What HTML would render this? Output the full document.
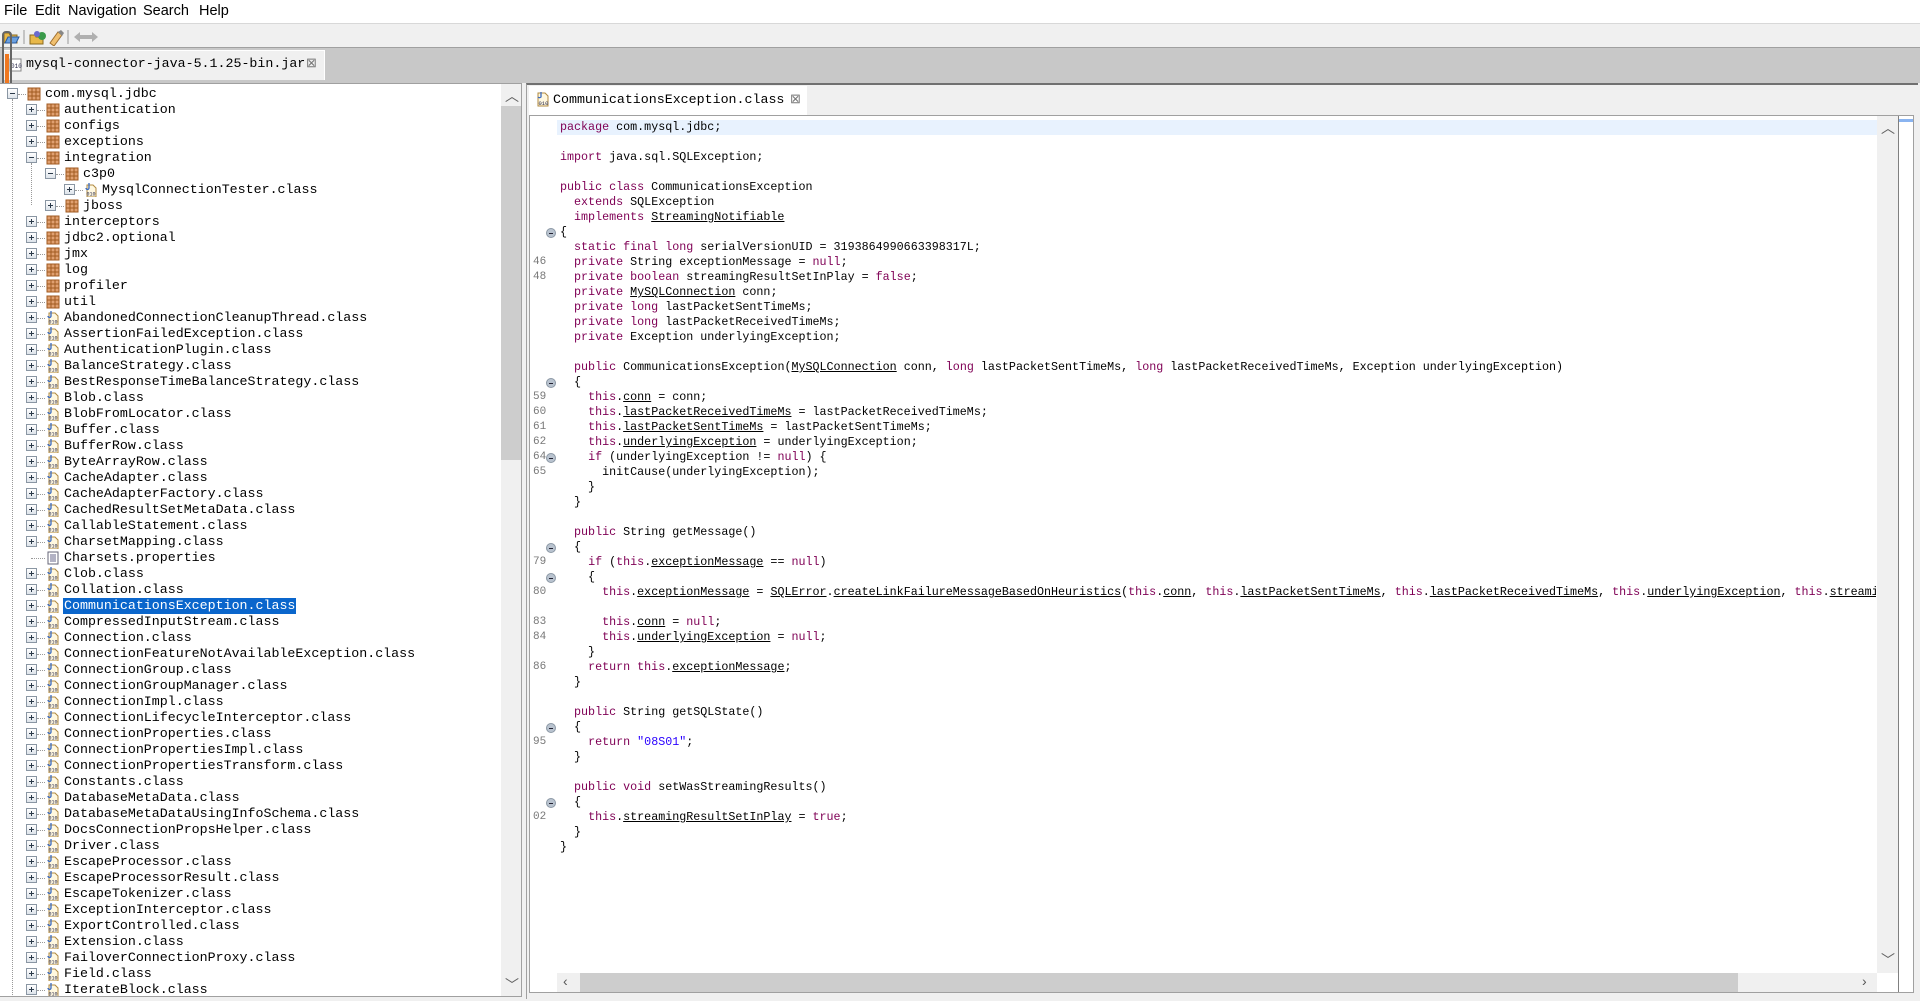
<!DOCTYPE html>
<html><head><meta charset="utf-8">
<style>
*{margin:0;padding:0;box-sizing:border-box}
body{width:1920px;height:1001px;overflow:hidden;background:#f0f0f0;font-family:"Liberation Sans",sans-serif;position:relative}
.abs{position:absolute}
.menu{top:0;left:0;width:1920px;height:24px;background:#fff;border-bottom:1px solid #d8d8d8;font-size:14.5px;color:#000}
.menu span{position:absolute;top:3px}
.tree{font-family:"Liberation Mono",monospace;font-size:13.3px;color:#000}
.row{position:absolute;height:16px;line-height:16px;white-space:pre}
.box{position:absolute;width:11px;height:11px;border:1px solid #8a96a3;background:linear-gradient(#fff,#dde3ea);top:2px}
.box:before{content:"";position:absolute;left:2px;top:4px;width:5px;height:1px;background:#2b3a4a}
.box.p:after{content:"";position:absolute;left:4px;top:2px;width:1px;height:5px;background:#2b3a4a}
.hd{position:absolute;top:8px;height:0;border-top:1px dotted #999}
.ico{position:absolute;top:1px;width:14px;height:14px}
.sel{background:#0a66cc;color:#fff;padding:0 1px;margin-left:-1px}
.code{font-family:"Liberation Mono",monospace;font-size:11.7px;color:#000}
.ln{position:absolute;height:15px;line-height:15px;white-space:pre}
.k{color:#7f0055}
.s{color:#2a00ff}
.u{text-decoration:underline}
.num{position:absolute;left:533px;font-family:"Liberation Mono",monospace;font-size:11px;color:#787878;height:15px;line-height:15px}
.fold{position:absolute;left:546px;width:10px;height:10px;border-radius:50%;background:#b9c3cf;border:1px solid #8c98a5}
.fold:after{content:"";position:absolute;left:2px;top:3.5px;width:4px;height:1px;background:#223}
</style></head><body>
<div class="abs menu"><span style="left:4px">File</span><span style="left:35px">Edit</span><span style="left:68px">Navigation</span><span style="left:143px">Search</span><span style="left:199px">Help</span></div>
<!-- toolbar -->
<div class="abs" style="top:24px;left:0;width:1920px;height:24px;background:#f0f0f0;border-bottom:1px solid #a0a0a0"></div>
<svg class="abs" style="left:2px;top:28px" width="110" height="18">
<path d="M2 5h5l1 2h7v8H2z" fill="#e8b84a" stroke="#8a6a20"/><path d="M3 15l3-6h11l-3 6z" fill="#6aa0e0" stroke="#2a5aa0"/>
<line x1="22" y1="2" x2="22" y2="16" stroke="#999"/>
<path d="M28 7h5l1 2h7v7H28z" fill="#e8b84a" stroke="#8a6a20"/><circle cx="40" cy="8" r="4" fill="#3a9a4a"/><circle cx="35" cy="6" r="3" fill="#6a6ad0"/>
<path d="M48 15l8-11 4 3-8 11z" fill="#f0c070" stroke="#a07030"/><path d="M56 4l3-2 3 3-2 3z" fill="#888"/>
<line x1="66" y1="2" x2="66" y2="16" stroke="#999"/>
<path d="M72 9l6-5v3h6v4h-6v3z" fill="#b0b0b0"/><path d="M108 9l-6-5v3h-6v4h6v3z" fill="#b0b0b0" transform="translate(-12 0)"/>
</svg>
<!-- left tab bar -->
<div class="abs" style="top:48px;left:0;width:1920px;height:35px;background:#c8c8c8"></div>
<div class="abs" style="top:50px;left:2px;width:323px;height:30px;background:#f0f0f0;border:1px solid #fff;border-bottom:none"></div>
<svg class="abs" style="left:9px;top:58px" width="14" height="14"><rect x="1" y="1" width="11" height="12" fill="#fff" stroke="#888"/><text x="2" y="10" font-size="6" font-family="Liberation Mono" fill="#224">010</text></svg>
<div class="abs" style="top:56px;left:26px;font-family:'Liberation Mono',monospace;font-size:13.3px;white-space:pre">mysql-connector-java-5.1.25-bin.jar</div>
<div class="abs" style="top:55px;left:306px;font-size:13px;color:#777">⊠</div>
<div class="abs" style="left:5px;top:54px;width:4px;height:40px;background:#f07820"></div>
<div class="abs" style="left:2px;top:31px;width:10px;height:64px;border:2px solid #666;border-radius:4px"></div>
<!-- tree panel -->
<div class="abs" style="top:83px;left:0;width:522px;height:914px;background:#fff;border-top:1px solid #a0a0a0;border-right:1px solid #a0a0a0;border-bottom:1px solid #a0a0a0"></div>
<div class="abs" style="left:501px;top:84px;width:20px;height:912px;background:#f0f0f0"></div>
<div class="abs" style="left:501px;top:106px;width:20px;height:354px;background:#cdcdcd"></div>
<div class="abs" style="left:505px;top:86px;font-size:14px;color:#606060">︿</div>
<div class="abs" style="left:505px;top:975px;font-size:14px;color:#606060">﹀</div>
<div class="abs" style="left:12px;top:99px;height:898px;border-left:1px dotted #999"></div>
<div class="abs" style="left:31px;top:163px;height:42px;border-left:1px dotted #999"></div>
<div class="abs tree" style="left:0;top:86px;width:500px;height:910px;overflow:hidden" id="tree">
</div>
<!-- editor panel -->
<div class="abs" style="top:83px;left:526px;width:1392px;height:916px;background:#f0f0f0;border-top:2px solid #707070;border-left:1px solid #a0a0a0"></div>
<div class="abs" style="top:86px;left:529px;width:278px;height:30px;background:#fff"></div>
<svg class="abs" style="left:535px;top:91px" width="16" height="16"><path d="M3 2h7l3 3v10H3z" fill="#fff8e0" stroke="#b08a40"/><path d="M6 1v5a2 2 0 0 1-3 0" fill="none" stroke="#3a6ac0" stroke-width="1.3"/><text x="3.5" y="14" font-size="5.5" font-family="Liberation Mono" fill="#224">010</text></svg>
<div class="abs" style="top:92px;left:553px;font-family:'Liberation Mono',monospace;font-size:13.3px;white-space:pre">CommunicationsException.class</div>
<div class="abs" style="top:91px;left:790px;font-size:13px;color:#777">⊠</div>
<div class="abs" style="top:115px;left:529px;width:1385px;height:878px;border:1px solid #a0a0a0;background:#fff"></div>
<div class="abs" style="top:120px;left:557px;width:1320px;height:15px;background:#e8f2fe"></div>
<div class="abs" style="top:116px;left:1877px;width:21px;height:857px;background:#f0f0f0"></div>
<div class="abs" style="top:116px;left:1898px;width:1px;height:876px;background:#808080"></div>
<div class="abs" style="top:119px;left:1899px;width:14px;height:3px;background:#8ab4f0"></div>
<div class="abs" style="left:1881px;top:118px;font-size:14px;color:#606060">︿</div>
<div class="abs" style="left:1881px;top:950px;font-size:14px;color:#606060">﹀</div>
<div class="abs" style="top:973px;left:557px;width:1320px;height:19px;background:#f0f0f0"></div>
<div class="abs" style="top:973px;left:580px;width:1158px;height:19px;background:#cdcdcd"></div>
<div class="abs" style="top:973px;left:563px;font-size:14px;color:#555">‹</div>
<div class="abs" style="top:973px;left:1862px;font-size:14px;color:#555">›</div>
<div class="abs code" style="left:560px;top:120px;width:1316px;height:852px;overflow:hidden">
<div style="position:relative">
<div class="ln" style="top:0"><span class="k">package</span> com.mysql.jdbc;</div>
<div class="ln" style="top:30px"><span class="k">import</span> java.sql.SQLException;</div>
<div class="ln" style="top:60px"><span class="k">public class</span> CommunicationsException</div>
<div class="ln" style="top:75px">  <span class="k">extends</span> SQLException</div>
<div class="ln" style="top:90px">  <span class="k">implements</span> <span class="u">StreamingNotifiable</span></div>
<div class="ln" style="top:105px">{</div>
<div class="ln" style="top:120px">  <span class="k">static final long</span> serialVersionUID = 3193864990663398317L;</div>
<div class="ln" style="top:135px">  <span class="k">private</span> String exceptionMessage = <span class="k">null</span>;</div>
<div class="ln" style="top:150px">  <span class="k">private boolean</span> streamingResultSetInPlay = <span class="k">false</span>;</div>
<div class="ln" style="top:165px">  <span class="k">private</span> <span class="u">MySQLConnection</span> conn;</div>
<div class="ln" style="top:180px">  <span class="k">private long</span> lastPacketSentTimeMs;</div>
<div class="ln" style="top:195px">  <span class="k">private long</span> lastPacketReceivedTimeMs;</div>
<div class="ln" style="top:210px">  <span class="k">private</span> Exception underlyingException;</div>
<div class="ln" style="top:240px">  <span class="k">public</span> CommunicationsException(<span class="u">MySQLConnection</span> conn, <span class="k">long</span> lastPacketSentTimeMs, <span class="k">long</span> lastPacketReceivedTimeMs, Exception underlyingException)</div>
<div class="ln" style="top:255px">  {</div>
<div class="ln" style="top:270px">    <span class="k">this</span>.<span class="u">conn</span> = conn;</div>
<div class="ln" style="top:285px">    <span class="k">this</span>.<span class="u">lastPacketReceivedTimeMs</span> = lastPacketReceivedTimeMs;</div>
<div class="ln" style="top:300px">    <span class="k">this</span>.<span class="u">lastPacketSentTimeMs</span> = lastPacketSentTimeMs;</div>
<div class="ln" style="top:315px">    <span class="k">this</span>.<span class="u">underlyingException</span> = underlyingException;</div>
<div class="ln" style="top:330px">    <span class="k">if</span> (underlyingException != <span class="k">null</span>) {</div>
<div class="ln" style="top:345px">      initCause(underlyingException);</div>
<div class="ln" style="top:360px">    }</div>
<div class="ln" style="top:375px">  }</div>
<div class="ln" style="top:405px">  <span class="k">public</span> String getMessage()</div>
<div class="ln" style="top:420px">  {</div>
<div class="ln" style="top:435px">    <span class="k">if</span> (<span class="k">this</span>.<span class="u">exceptionMessage</span> == <span class="k">null</span>)</div>
<div class="ln" style="top:450px">    {</div>
<div class="ln" style="top:465px">      <span class="k">this</span>.<span class="u">exceptionMessage</span> = <span class="u">SQLError</span>.<span class="u">createLinkFailureMessageBasedOnHeuristics</span>(<span class="k">this</span>.<span class="u">conn</span>, <span class="k">this</span>.<span class="u">lastPacketSentTimeMs</span>, <span class="k">this</span>.<span class="u">lastPacketReceivedTimeMs</span>, <span class="k">this</span>.<span class="u">underlyingException</span>, <span class="k">this</span>.<span class="u">streamingResultSetInPlay</span>);</div>
<div class="ln" style="top:495px">      <span class="k">this</span>.<span class="u">conn</span> = <span class="k">null</span>;</div>
<div class="ln" style="top:510px">      <span class="k">this</span>.<span class="u">underlyingException</span> = <span class="k">null</span>;</div>
<div class="ln" style="top:525px">    }</div>
<div class="ln" style="top:540px">    <span class="k">return this</span>.<span class="u">exceptionMessage</span>;</div>
<div class="ln" style="top:555px">  }</div>
<div class="ln" style="top:585px">  <span class="k">public</span> String getSQLState()</div>
<div class="ln" style="top:600px">  {</div>
<div class="ln" style="top:615px">    <span class="k">return</span> <span class="s">"08S01"</span>;</div>
<div class="ln" style="top:630px">  }</div>
<div class="ln" style="top:660px">  <span class="k">public void</span> setWasStreamingResults()</div>
<div class="ln" style="top:675px">  {</div>
<div class="ln" style="top:690px">    <span class="k">this</span>.<span class="u">streamingResultSetInPlay</span> = <span class="k">true</span>;</div>
<div class="ln" style="top:705px">  }</div>
<div class="ln" style="top:720px">}</div>
</div></div>
<!-- gutter numbers -->
<div class="num" style="top:255px">46</div>
<div class="num" style="top:270px">48</div>
<div class="num" style="top:390px">59</div>
<div class="num" style="top:405px">60</div>
<div class="num" style="top:420px">61</div>
<div class="num" style="top:435px">62</div>
<div class="num" style="top:450px">64</div>
<div class="num" style="top:465px">65</div>
<div class="num" style="top:555px">79</div>
<div class="num" style="top:585px">80</div>
<div class="num" style="top:615px">83</div>
<div class="num" style="top:630px">84</div>
<div class="num" style="top:660px">86</div>
<div class="num" style="top:735px">95</div>
<div class="num" style="top:810px">02</div>
<div class="fold" style="top:228px"></div>
<div class="fold" style="top:378px"></div>
<div class="fold" style="top:453px"></div>
<div class="fold" style="top:543px"></div>
<div class="fold" style="top:573px"></div>
<div class="fold" style="top:723px"></div>
<div class="fold" style="top:798px"></div>
<script>
var items=[
[0,'-','pkg','com.mysql.jdbc'],[1,'+','pkg','authentication'],[1,'+','pkg','configs'],[1,'+','pkg','exceptions'],[1,'-','pkg','integration'],[2,'-','pkg','c3p0'],[3,'+','cls','MysqlConnectionTester.class'],[2,'+','pkg','jboss'],[1,'+','pkg','interceptors'],[1,'+','pkg','jdbc2.optional'],[1,'+','pkg','jmx'],[1,'+','pkg','log'],[1,'+','pkg','profiler'],[1,'+','pkg','util'],
[1,'+','cls','AbandonedConnectionCleanupThread.class'],[1,'+','cls','AssertionFailedException.class'],[1,'+','cls','AuthenticationPlugin.class'],[1,'+','cls','BalanceStrategy.class'],[1,'+','cls','BestResponseTimeBalanceStrategy.class'],[1,'+','cls','Blob.class'],[1,'+','cls','BlobFromLocator.class'],[1,'+','cls','Buffer.class'],[1,'+','cls','BufferRow.class'],[1,'+','cls','ByteArrayRow.class'],[1,'+','cls','CacheAdapter.class'],[1,'+','cls','CacheAdapterFactory.class'],[1,'+','cls','CachedResultSetMetaData.class'],[1,'+','cls','CallableStatement.class'],[1,'+','cls','CharsetMapping.class'],[1,'','prop','Charsets.properties'],[1,'+','cls','Clob.class'],[1,'+','cls','Collation.class'],[1,'+','cls','CommunicationsException.class',1],[1,'+','cls','CompressedInputStream.class'],[1,'+','cls','Connection.class'],[1,'+','cls','ConnectionFeatureNotAvailableException.class'],[1,'+','cls','ConnectionGroup.class'],[1,'+','cls','ConnectionGroupManager.class'],[1,'+','cls','ConnectionImpl.class'],[1,'+','cls','ConnectionLifecycleInterceptor.class'],[1,'+','cls','ConnectionProperties.class'],[1,'+','cls','ConnectionPropertiesImpl.class'],[1,'+','cls','ConnectionPropertiesTransform.class'],[1,'+','cls','Constants.class'],[1,'+','cls','DatabaseMetaData.class'],[1,'+','cls','DatabaseMetaDataUsingInfoSchema.class'],[1,'+','cls','DocsConnectionPropsHelper.class'],[1,'+','cls','Driver.class'],[1,'+','cls','EscapeProcessor.class'],[1,'+','cls','EscapeProcessorResult.class'],[1,'+','cls','EscapeTokenizer.class'],[1,'+','cls','ExceptionInterceptor.class'],[1,'+','cls','ExportControlled.class'],[1,'+','cls','Extension.class'],[1,'+','cls','FailoverConnectionProxy.class'],[1,'+','cls','Field.class'],[1,'+','cls','IterateBlock.class']];
var icons={
pkg:'<svg class="ico" viewBox="0 0 14 14"><rect x="1" y="1" width="12" height="12" fill="#e0a070" stroke="#a05a20"/><path d="M1 5h12M1 9h12M5 1v12M9 1v12" stroke="#a05a20"/></svg>',
cls:'<svg class="ico" viewBox="0 0 14 14"><path d="M3 2h6l3 3v9H3z" fill="#fff8e0" stroke="#b08a40"/><path d="M5 0v5a1.5 1.5 0 0 1-3 0" fill="none" stroke="#3a6ac0" stroke-width="1.3"/><text x="2.5" y="12.5" font-size="5" font-family="Liberation Mono" fill="#224">010</text></svg>',
prop:'<svg class="ico" viewBox="0 0 14 14"><rect x="2" y="1" width="10" height="12" fill="#fff" stroke="#667"/><path d="M4 4h6M4 6h6M4 8h6M4 10h6" stroke="#668"/></svg>'};
var h='';
items.forEach(function(it,i){
 var lv=it[0],tx=45+19*lv,bx=12+19*lv;
 var s='<div class="row" style="top:'+(i*16)+'px;left:0;width:500px">';
 if(it[1]) s+='<div class="box '+(it[1]=='+'?'p':'')+'" style="left:'+(bx-5)+'px"></div>';
 s+='<div class="hd" style="left:'+(bx+(it[1]?6:0))+'px;width:'+(tx-bx-19-(it[1]?6:0))+'px"></div>';
 s+='<span style="position:absolute;left:'+(tx-18)+'px;top:0;width:14px;height:16px">'+icons[it[2]]+'</span>';
 s+='<span style="position:absolute;left:'+tx+'px" class="'+(it[4]?'sel':'')+'">'+it[3]+'</span></div>';
 h+=s;});
document.getElementById('tree').innerHTML=h;
</script>
</body></html>
